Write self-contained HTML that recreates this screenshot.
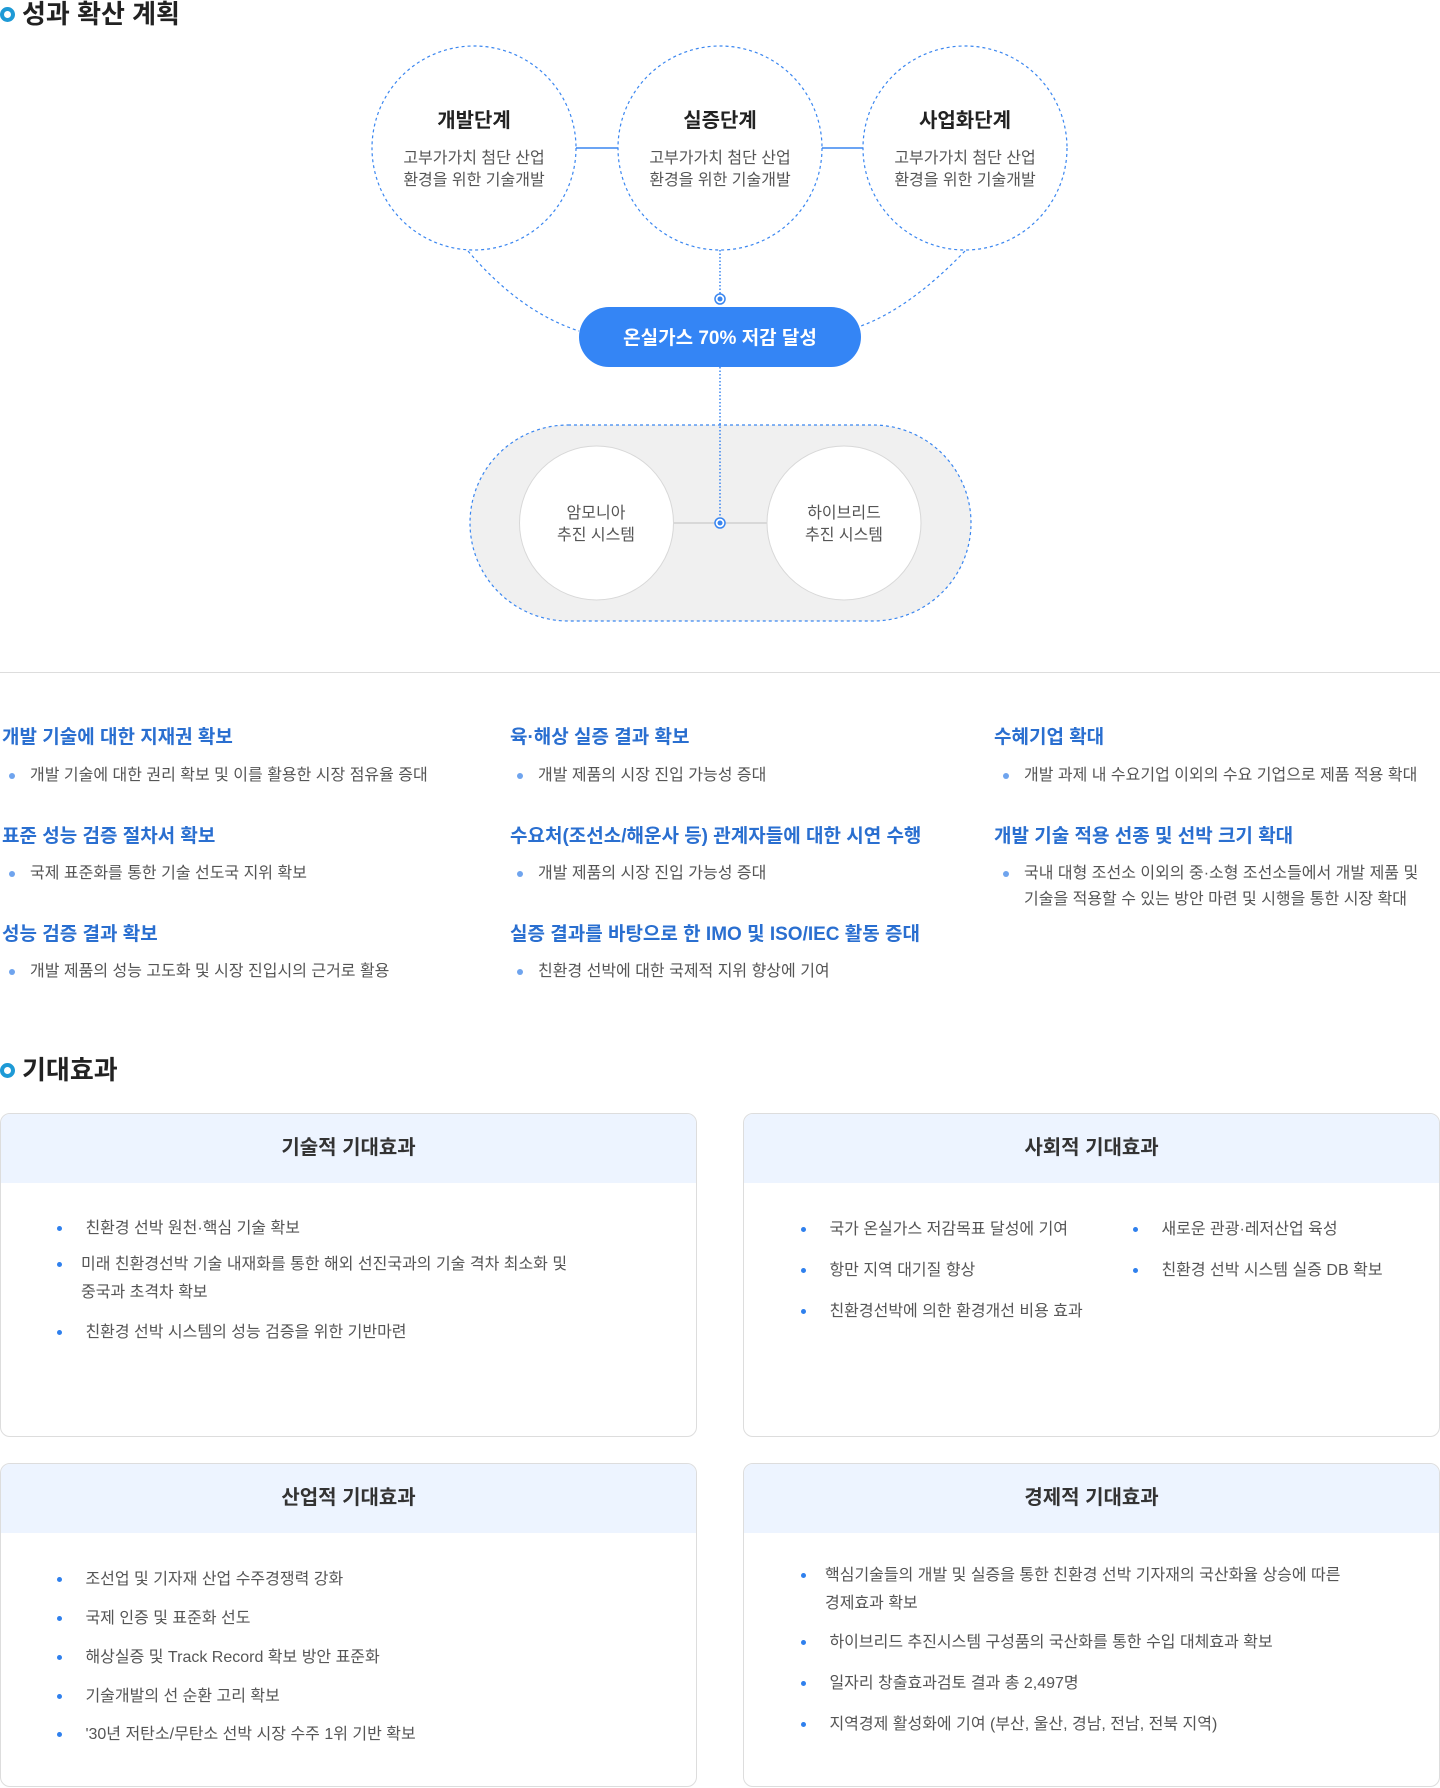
<!DOCTYPE html>
<html><head><meta charset="utf-8"><style>
*{margin:0;padding:0;box-sizing:border-box}
body{width:1440px;height:1788px;background:#fff;font-family:"Liberation Sans","Noto Sans CJK KR",sans-serif;position:relative;overflow:hidden;color:#555}
.a{position:absolute;white-space:nowrap}
.h2{font-size:26px;font-weight:700;color:#222;line-height:30px;padding-left:22px}
.ring{position:absolute;left:0;top:8px;width:15px;height:15px;border-radius:50%;border:4px solid #1e9ad6}
.hd{font-size:19px;font-weight:700;color:#2a6fd0;line-height:24px}
.li{font-size:16px;line-height:26px;color:#555;padding-left:30px;position:absolute;white-space:nowrap}
.li:before{content:"";position:absolute;left:9px;top:10px;width:6px;height:6px;border-radius:50%;background:#6fa4ee}
.box{position:absolute;width:697px;height:324px;border:1px solid #ddd;border-radius:10px;overflow:hidden}
.bh{height:69px;background:#edf4ff;text-align:center;font-size:20px;font-weight:700;color:#333;line-height:69px}
.bl{position:absolute;font-size:16px;line-height:28px;color:#555;white-space:nowrap;padding-left:24px}
.bl:before{content:"";position:absolute;left:0;top:11px;width:5px;height:5px;border-radius:50%;background:#2f80ed}
</style></head><body>
<div class="a h2" style="left:0;top:-1px"><span class="ring"></span>성과 확산 계획</div>

<svg class="a" style="left:0;top:0" width="1440" height="700">
<g fill="none" stroke="#3a86f0" stroke-width="1.2" stroke-dasharray="3 3">
<circle cx="474" cy="148" r="102"/><circle cx="720" cy="148" r="102"/><circle cx="965" cy="148" r="102"/>
<path d="M468 251 Q520 312 579 331"/>
<path d="M965 251 Q910 308 861 326"/>
<rect x="470" y="425" width="501" height="196" rx="98" fill="#f0f0f0"/>
</g>
<g stroke="#3a86f0" stroke-width="1.5"><line x1="576" y1="148" x2="618" y2="148"/><line x1="822" y1="148" x2="863" y2="148"/></g>
<g stroke="#3a86f0" stroke-width="1.5" stroke-dasharray="1.5 2"><line x1="720" y1="250" x2="720" y2="294"/><line x1="720" y1="367" x2="720" y2="518"/></g>
<line x1="673" y1="523" x2="767" y2="523" stroke="#d0d0d0" stroke-width="1.5"/>
<circle cx="596.5" cy="523" r="77" fill="#fff" stroke="#d8d8d8"/>
<circle cx="844" cy="523" r="77" fill="#fff" stroke="#d8d8d8"/>
<rect x="579" y="307" width="282" height="60" rx="30" fill="#3485f5"/>
<g fill="#fff" stroke="#3a86f0" stroke-width="1.5"><circle cx="720" cy="299" r="5"/><circle cx="720" cy="523" r="5"/></g>
<g fill="#3a86f0"><circle cx="720" cy="299" r="2.5"/><circle cx="720" cy="523" r="2.5"/></g>
<g font-family="Liberation Sans, Noto Sans CJK KR, sans-serif" text-anchor="middle">
<g font-size="20" font-weight="700" fill="#222"><text x="474" y="127">개발단계</text><text x="720" y="127">실증단계</text><text x="965" y="127">사업화단계</text></g>
<g font-size="16" fill="#555"><text x="474" y="163">고부가가치 첨단 산업</text><text x="474" y="185">환경을 위한 기술개발</text>
<text x="720" y="163">고부가가치 첨단 산업</text><text x="720" y="185">환경을 위한 기술개발</text>
<text x="965" y="163">고부가가치 첨단 산업</text><text x="965" y="185">환경을 위한 기술개발</text>
<text x="596" y="518">암모니아</text><text x="596" y="540">추진 시스템</text>
<text x="844" y="518">하이브리드</text><text x="844" y="540">추진 시스템</text></g>
<text x="720" y="344" font-size="19" font-weight="700" fill="#fff">온실가스 70% 저감 달성</text>
</g>
<line x1="0" y1="672.5" x2="1440" y2="672.5" stroke="#ddd"/>
</svg>

<div class="a hd" style="left:2px;top:726px">개발 기술에 대한 지재권 확보</div>
<div class="li" style="left:0;top:763px">개발 기술에 대한 권리 확보 및 이를 활용한 시장 점유율 증대</div>
<div class="a hd" style="left:2px;top:825px">표준 성능 검증 절차서 확보</div>
<div class="li" style="left:0;top:861px">국제 표준화를 통한 기술 선도국 지위 확보</div>
<div class="a hd" style="left:2px;top:923px">성능 검증 결과 확보</div>
<div class="li" style="left:0;top:959px">개발 제품의 성능 고도화 및 시장 진입시의 근거로 활용</div>

<div class="a hd" style="left:510px;top:726px">육·해상 실증 결과 확보</div>
<div class="li" style="left:508px;top:763px">개발 제품의 시장 진입 가능성 증대</div>
<div class="a hd" style="left:510px;top:825px">수요처(조선소/해운사 등) 관계자들에 대한 시연 수행</div>
<div class="li" style="left:508px;top:861px">개발 제품의 시장 진입 가능성 증대</div>
<div class="a hd" style="left:510px;top:923px">실증 결과를 바탕으로 한 IMO 및 ISO/IEC 활동 증대</div>
<div class="li" style="left:508px;top:959px">친환경 선박에 대한 국제적 지위 향상에 기여</div>

<div class="a hd" style="left:994px;top:726px">수혜기업 확대</div>
<div class="li" style="left:994px;top:763px">개발 과제 내 수요기업 이외의 수요 기업으로 제품 적용 확대</div>
<div class="a hd" style="left:994px;top:825px">개발 기술 적용 선종 및 선박 크기 확대</div>
<div class="li" style="left:994px;top:861px">국내 대형 조선소 이외의 중·소형 조선소들에서 개발 제품 및<br>기술을 적용할 수 있는 방안 마련 및 시행을 통한 시장 확대</div>

<div class="a h2" style="left:0;top:1055px"><span class="ring"></span>기대효과</div>

<div class="box" style="left:0;top:1113px"><div class="bh">기술적 기대효과</div></div>
<div class="bl" style="left:57px;top:1215px">&nbsp;친환경 선박 원천·핵심 기술 확보</div>
<div class="bl" style="left:57px;top:1251px">미래 친환경선박 기술 내재화를 통한 해외 선진국과의 기술 격차 최소화 및<br>중국과 초격차 확보</div>
<div class="bl" style="left:57px;top:1319px">&nbsp;친환경 선박 시스템의 성능 검증을 위한 기반마련</div>

<div class="box" style="left:743px;top:1113px"><div class="bh">사회적 기대효과</div></div>
<div class="bl" style="left:801px;top:1216px">&nbsp;국가 온실가스 저감목표 달성에 기여</div>
<div class="bl" style="left:801px;top:1257px">&nbsp;항만 지역 대기질 향상</div>
<div class="bl" style="left:801px;top:1298px">&nbsp;친환경선박에 의한 환경개선 비용 효과</div>
<div class="bl" style="left:1133px;top:1216px">&nbsp;새로운 관광·레저산업 육성</div>
<div class="bl" style="left:1133px;top:1257px">&nbsp;친환경 선박 시스템 실증 DB 확보</div>

<div class="box" style="left:0;top:1463px"><div class="bh">산업적 기대효과</div></div>
<div class="bl" style="left:57px;top:1566px">&nbsp;조선업 및 기자재 산업 수주경쟁력 강화</div>
<div class="bl" style="left:57px;top:1605px">&nbsp;국제 인증 및 표준화 선도</div>
<div class="bl" style="left:57px;top:1644px">&nbsp;해상실증 및 Track Record 확보 방안 표준화</div>
<div class="bl" style="left:57px;top:1683px">&nbsp;기술개발의 선 순환 고리 확보</div>
<div class="bl" style="left:57px;top:1721px">&nbsp;'30년 저탄소/무탄소 선박 시장 수주 1위 기반 확보</div>

<div class="box" style="left:743px;top:1463px"><div class="bh">경제적 기대효과</div></div>
<div class="bl" style="left:801px;top:1562px">핵심기술들의 개발 및 실증을 통한 친환경 선박 기자재의 국산화율 상승에 따른<br>경제효과 확보</div>
<div class="bl" style="left:801px;top:1629px">&nbsp;하이브리드 추진시스템 구성품의 국산화를 통한 수입 대체효과 확보</div>
<div class="bl" style="left:801px;top:1670px">&nbsp;일자리 창출효과검토 결과 총 2,497명</div>
<div class="bl" style="left:801px;top:1711px">&nbsp;지역경제 활성화에 기여 (부산, 울산, 경남, 전남, 전북 지역)</div>
</body></html>
